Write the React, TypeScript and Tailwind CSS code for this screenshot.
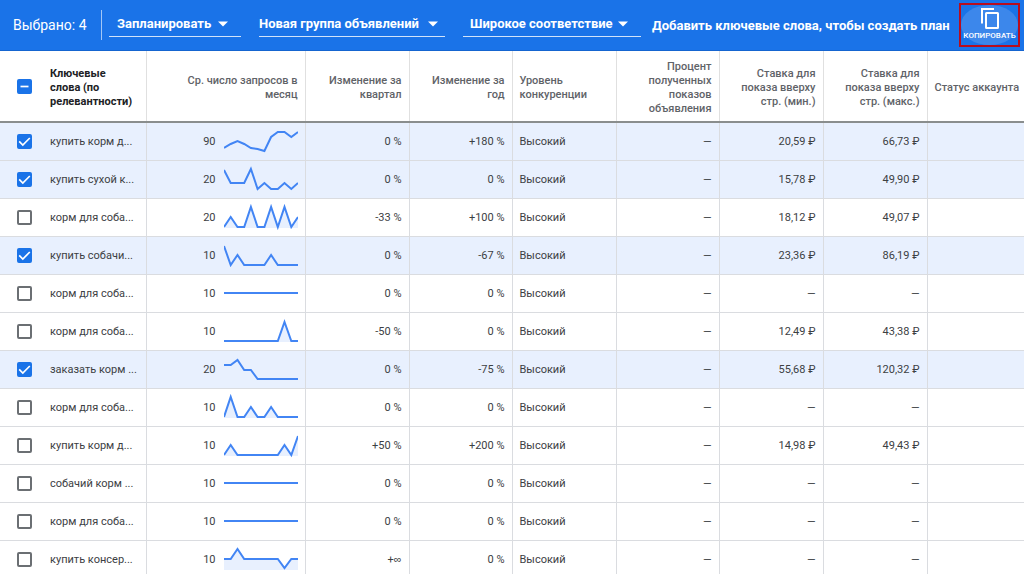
import React, { useState } from 'react';

interface KeywordRow {
  id: number;
  keyword: string;
  searches: number;
  trend: number[];
  quarter: string;
  year: string;
  minBid: string;
  maxBid: string;
}

// Trend values are y positions in the 74x28 sparkline box, one per month
const keywords: KeywordRow[] = [
  { id: 1, keyword: 'купить корм д...', searches: 90, trend: [21, 17, 14, 17, 21, 22, 24, 10, 5, 5, 10, 5], quarter: '0 %', year: '+180 %', minBid: '20,59 ₽', maxBid: '66,73 ₽' },
  { id: 2, keyword: 'купить сухой к...', searches: 20, trend: [5, 18, 18, 18, 4, 24, 18, 24, 24, 18, 24, 18], quarter: '0 %', year: '0 %', minBid: '15,78 ₽', maxBid: '49,90 ₽' },
  { id: 3, keyword: 'корм для соба...', searches: 20, trend: [24, 14, 24, 24, 4, 24, 24, 4, 24, 4, 24, 14], quarter: '-33 %', year: '+100 %', minBid: '18,12 ₽', maxBid: '49,07 ₽' },
  { id: 4, keyword: 'купить собачи...', searches: 10, trend: [5, 24, 14, 24, 24, 24, 24, 14, 24, 24, 24, 24], quarter: '0 %', year: '-67 %', minBid: '23,36 ₽', maxBid: '86,19 ₽' },
  { id: 5, keyword: 'корм для соба...', searches: 10, trend: [14, 14, 14, 14, 14, 14, 14, 14, 14, 14, 14, 14], quarter: '0 %', year: '0 %', minBid: '—', maxBid: '—' },
  { id: 6, keyword: 'корм для соба...', searches: 10, trend: [24, 24, 24, 24, 24, 24, 24, 24, 24, 5, 24, 24], quarter: '-50 %', year: '0 %', minBid: '12,49 ₽', maxBid: '43,38 ₽' },
  { id: 7, keyword: 'заказать корм ...', searches: 20, trend: [10, 10, 5, 15, 15, 24, 24, 24, 24, 24, 24, 24], quarter: '0 %', year: '-75 %', minBid: '55,68 ₽', maxBid: '120,32 ₽' },
  { id: 8, keyword: 'корм для соба...', searches: 10, trend: [24, 4, 24, 24, 14, 24, 24, 14, 24, 24, 24, 24], quarter: '0 %', year: '0 %', minBid: '—', maxBid: '—' },
  { id: 9, keyword: 'купить корм д...', searches: 10, trend: [24, 14, 24, 24, 24, 24, 24, 24, 24, 14, 24, 5], quarter: '+50 %', year: '+200 %', minBid: '14,98 ₽', maxBid: '49,43 ₽' },
  { id: 10, keyword: 'собачий корм ...', searches: 10, trend: [14, 14, 14, 14, 14, 14, 14, 14, 14, 14, 14, 14], quarter: '0 %', year: '0 %', minBid: '—', maxBid: '—' },
  { id: 11, keyword: 'корм для соба...', searches: 10, trend: [14, 14, 14, 14, 14, 14, 14, 14, 14, 14, 14, 14], quarter: '0 %', year: '0 %', minBid: '—', maxBid: '—' },
  { id: 12, keyword: 'купить консер...', searches: 10, trend: [14, 14, 4, 14, 14, 14, 14, 14, 14, 23, 14, 14], quarter: '+∞', year: '0 %', minBid: '—', maxBid: '—' },
];

const Sparkline: React.FC<{ values: number[] }> = ({ values }) => {
  const points = values.map((y, i) => `${((i * 74) / 11).toFixed(1)},${y}`).join(' ');
  const flat = values.every((y) => y === values[0]);

  return (
    <svg width="74" height="28" viewBox="0 0 74 28" fill="none" aria-hidden="true">
      {!flat && <polygon points={`0,25 ${points} 74,25`} fill="#e8f0fe" />}
      <polyline points={points} stroke="#4285f4" strokeWidth="2" />
    </svg>
  );
};

interface CheckboxProps {
  checked: boolean;
  mixed?: boolean;
  label: string;
  onChange: () => void;
}

const Checkbox: React.FC<CheckboxProps> = ({ checked, mixed, label, onChange }) => (
  <span className="grid w-[15px] shrink-0">
    <input
      type="checkbox"
      checked={checked}
      onChange={onChange}
      aria-label={label}
      className={`col-start-1 row-start-1 size-[15px] appearance-none rounded-xs border-2 ${
        checked || mixed ? 'border-[#1a73e8] bg-[#1a73e8]' : 'border-[#6b6f73] bg-white'
      }`}
    />
    {(checked || mixed) && (
      <svg
        viewBox="0 0 15 15"
        fill="none"
        stroke="white"
        strokeWidth="1.7"
        className="pointer-events-none col-start-1 row-start-1 size-[15px]"
      >
        <path d={mixed ? 'M3.5 7.5H11.5' : 'M2.2 7.4L5.8 11L12.8 4'} />
      </svg>
    )}
  </span>
);

interface ToolbarSelectProps {
  label: string;
  value: string;
  className: string;
  arrowClassName: string;
}

const ToolbarSelect: React.FC<ToolbarSelectProps> = ({ label, value, className, arrowClassName }) => (
  <div className="grid items-center">
    <select
      aria-label={label}
      className={`col-start-1 row-start-1 h-6 appearance-none border-b border-white/80 bg-transparent pb-0.5 text-[13px] leading-5 font-bold text-white ${className}`}
    >
      <option>{value}</option>
    </select>
    <svg
      width="10"
      height="6"
      viewBox="0 0 10 6"
      fill="white"
      className={`pointer-events-none col-start-1 row-start-1 mb-0.5 justify-self-end ${arrowClassName}`}
    >
      <path d="M0 0.5H10L5 5.5Z" />
    </svg>
  </div>
);

const headCell = 'border-r border-[#e0e0e0] px-[7px] pt-[3px] font-medium';
const cell = 'border-r border-[#dadce0] px-[7px] pt-0.5';

export default function App() {
  const [selected, setSelected] = useState<number[]>([1, 2, 4, 7]);

  const toggle = (id: number) =>
    setSelected((prev) => (prev.includes(id) ? prev.filter((x) => x !== id) : [...prev, id]));

  const toggleAll = () => setSelected(selected.length ? [] : keywords.map((k) => k.id));

  return (
    <div className="h-screen overflow-hidden bg-white font-[Roboto,'Liberation_Sans',sans-serif] text-[#3c4043]">
      <header className="flex h-[51px] items-center border-b border-[#1565d0] bg-[#1a73e8] pr-1 pl-[13px] whitespace-nowrap text-white">
        <span className="w-[88px] shrink-0 text-sm">Выбрано: {selected.length}</span>
        <span className="mr-[7px] h-[30px] w-px shrink-0 bg-white/60" />
        <div className="flex shrink-0 gap-[18px]">
          <ToolbarSelect label="Действие" value="Запланировать" className="w-[132px] pl-2" arrowClassName="mr-[13px]" />
          <ToolbarSelect label="Группа объявлений" value="Новая группа объявлений" className="w-[186px]" arrowClassName="mr-[7px]" />
          <ToolbarSelect label="Тип соответствия" value="Широкое соответствие" className="w-[178px] pl-[7px]" arrowClassName="mr-[13px]" />
        </div>
        <span className="ml-[11px] pt-0.5 text-[13px] font-bold">Добавить ключевые слова, чтобы создать план</span>
        <button
          type="button"
          className="ml-auto h-11 w-[61px] shrink-0 border-2 border-[#b80d1e] text-[8px] font-medium"
        >
          <span className="flex h-full flex-col items-center justify-center rounded-[50%] bg-white/15">
            <svg width="20" height="22" viewBox="0 0 20 22" fill="none" stroke="white" strokeWidth="2">
              <path d="M2 15.5V1H14" />
              <rect x="6" y="5" width="12" height="15" rx="0.5" />
            </svg>
            <span className="leading-3">КОПИРОВАТЬ</span>
          </span>
        </button>
      </header>

      <table className="w-full table-fixed border-collapse text-right text-[11px]">
        <colgroup>
          <col className="w-[146px]" />
          <col className="w-[159px]" />
          <col className="w-[104px]" />
          <col className="w-[103px]" />
          <col className="w-[104px]" />
          <col className="w-[103px]" />
          <col className="w-[104px]" />
          <col className="w-[104px]" />
          <col />
        </colgroup>
        <thead>
          <tr className="h-[71px] border-b-2 border-[#8a8e8e] leading-[14px] text-[#5f6368]">
            <th className="border-r border-[#e0e0e0] pl-[17px] text-left font-bold text-[#202124]">
              <div className="flex items-center gap-[18px]">
                <Checkbox
                  checked={selected.length === keywords.length}
                  mixed={selected.length > 0 && selected.length < keywords.length}
                  label="Выбрать все"
                  onChange={toggleAll}
                />
                <span className="pt-[3px]">
                  Ключевые
                  <br />
                  слова (по
                  <br />
                  релевантности)
                </span>
              </div>
            </th>
            <th className={headCell}>Ср. число запросов в<br />месяц</th>
            <th className={headCell}>Изменение за<br />квартал</th>
            <th className={headCell}>Изменение за<br />год</th>
            <th className={`${headCell} text-left`}>Уровень<br />конкуренции</th>
            <th className={headCell}>Процент<br />полученных<br />показов<br />объявления</th>
            <th className={headCell}>Ставка для<br />показа вверху<br />стр. (мин.)</th>
            <th className={headCell}>Ставка для<br />показа вверху<br />стр. (макс.)</th>
            <th className="pt-[3px] pl-[7px] text-left font-medium whitespace-nowrap">Статус аккаунта</th>
          </tr>
        </thead>
        <tbody>
          {keywords.map((row) => {
            const checked = selected.includes(row.id);
            return (
              <tr key={row.id} className={`h-[38px] border-b border-[#dadce0] ${checked ? 'bg-[#e8f0fe]' : 'bg-white'}`}>
                <td className="border-r border-[#dadce0] pl-[17px] text-left">
                  <div className="flex items-center gap-[18px] whitespace-nowrap">
                    <Checkbox checked={checked} label={row.keyword} onChange={() => toggle(row.id)} />
                    <span className="pt-0.5">{row.keyword}</span>
                  </div>
                </td>
                <td className="border-r border-[#dadce0] px-[7px]">
                  <div className="flex items-center justify-end gap-2">
                    <span className="pt-0.5">{row.searches}</span>
                    <Sparkline values={row.trend} />
                  </div>
                </td>
                <td className={cell}>
                  {row.quarter === '+∞' ? (
                    <>
                      +<span className="font-['Liberation_Sans',sans-serif]">∞</span>
                    </>
                  ) : (
                    row.quarter
                  )}
                </td>
                <td className={cell}>{row.year}</td>
                <td className={`${cell} text-left`}>Высокий</td>
                <td className={cell}>—</td>
                <td className={cell}>{row.minBid}</td>
                <td className={cell}>{row.maxBid}</td>
                <td />
              </tr>
            );
          })}
        </tbody>
      </table>
    </div>
  );
}
